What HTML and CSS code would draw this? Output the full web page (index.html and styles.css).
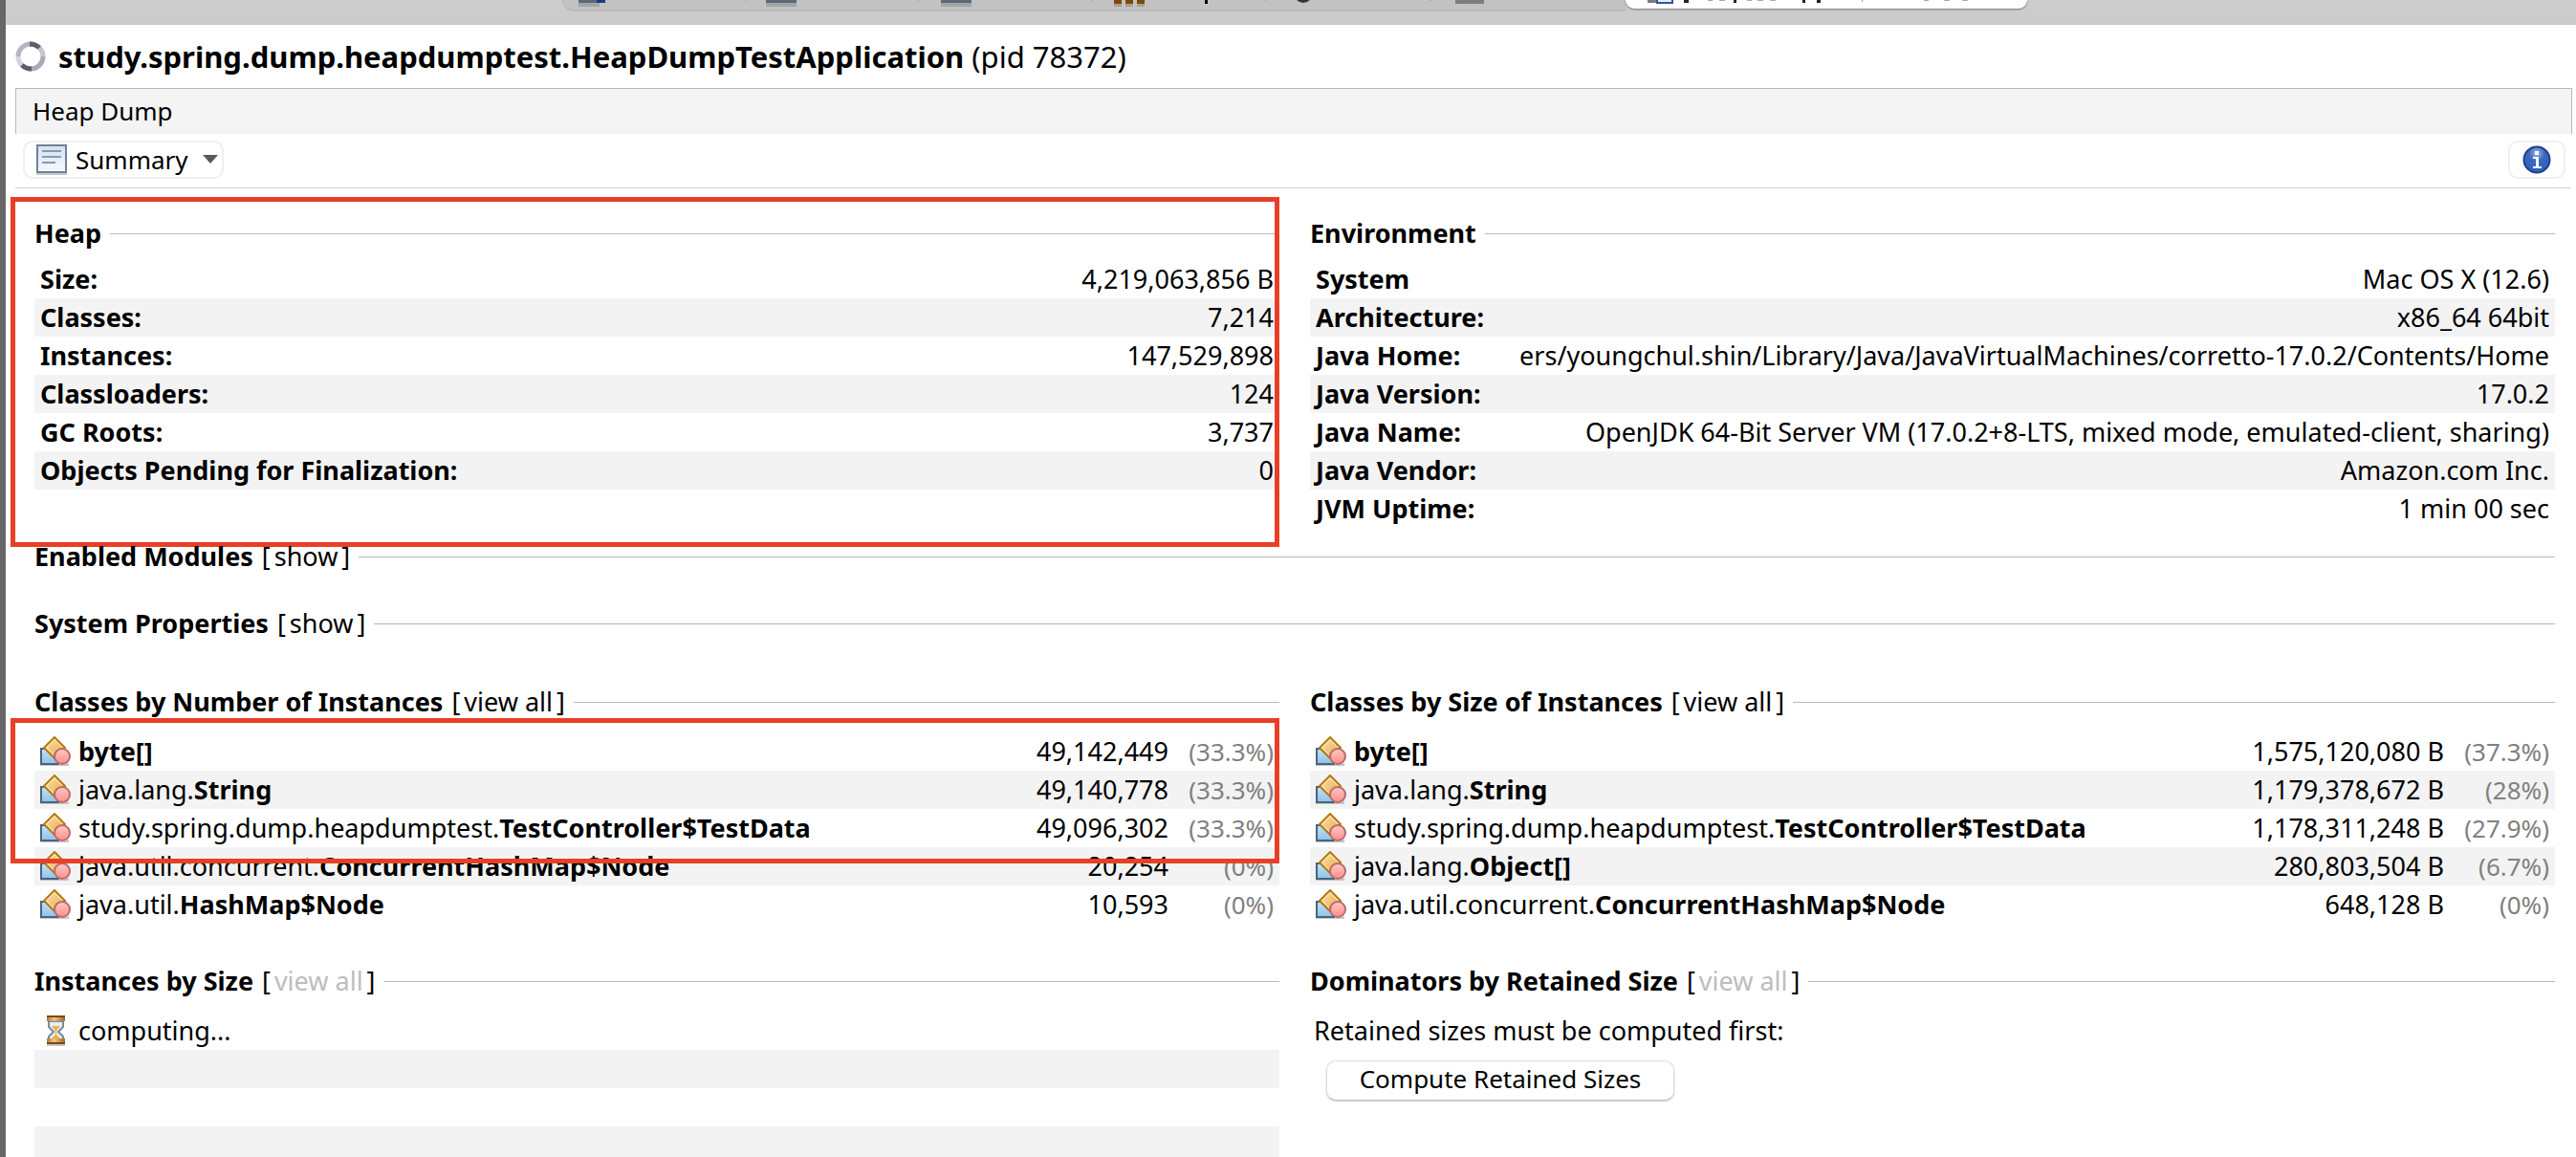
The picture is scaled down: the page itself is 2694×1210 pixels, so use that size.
FILE: index.html
```html
<!DOCTYPE html>
<html lang="en">
<head>
<meta charset="utf-8">
<title>Heap Dump</title>
<link rel="stylesheet" href="styles.css">
</head>
<body>
<svg class="defs" width="0" height="0" aria-hidden="true">
  <defs>
    <linearGradient id="gold" x1="0" y1="0" x2="1" y2="1"><stop offset="0" stop-color="#fbe3b0"/><stop offset="1" stop-color="#e5a845"/></linearGradient>
    <linearGradient id="sky" x1="0" y1="0" x2="0" y2="1"><stop offset="0" stop-color="#c4e2f6"/><stop offset="1" stop-color="#8fc2ea"/></linearGradient>
    <linearGradient id="rose" x1="0" y1="0" x2="0" y2="1"><stop offset="0" stop-color="#ffc9c4"/><stop offset="1" stop-color="#ff8e8b"/></linearGradient>
    <linearGradient id="paper" x1="0" y1="0" x2="0" y2="1"><stop offset="0" stop-color="#d4e0ee"/><stop offset="1" stop-color="#f8f9ff"/></linearGradient>
    <linearGradient id="wood" x1="0" y1="0" x2="1" y2="0"><stop offset="0" stop-color="#b5752a"/><stop offset=".4" stop-color="#ecc48c"/><stop offset="1" stop-color="#a5661f"/></linearGradient>
    <radialGradient id="blue" cx=".5" cy=".25" r=".75"><stop offset="0" stop-color="#9cb9ea"/><stop offset=".4" stop-color="#3c68bd"/><stop offset="1" stop-color="#2f5fc0"/></radialGradient>
    <symbol id="class" viewBox="0 0 32 32">
      <path d="M0 30h24l6-2v3H0z" fill="#c5c5c5"/>
      <path d="M1 13h18v16H1z" fill="url(#sky)" stroke="#46657f" stroke-width="2"/>
      <path d="M15 1 26 12 15 23 4 12z" fill="url(#gold)" stroke="#b57a12" stroke-width="2"/>
      <path d="M15 3.500 23.500 12 15 20.500 6.500 12z" fill="none" stroke="#fff0cf" stroke-width="1"/>
      <circle cx="23" cy="21" r="8" fill="url(#rose)" stroke="#b96a6a" stroke-width="2"/>
    </symbol>
  </defs>
</svg>
<div class="window">
  <div class="topbar">
    <div class="tabs">
      <div class="strip">
        <svg viewBox="0 0 1120 12" aria-hidden="true">
          <path d="M16 0h22v3H16zM212 0h32v3h-32zM395 0h32v3h-32z" fill="#5d6975"/>
          <path d="M16 3h22v4H16zM212 3h32v4h-32zM395 3h32v4h-32z" fill="#a3a6a8"/>
          <path d="M35 0h9v3h-9z" fill="#1c3c88"/>
          <path d="M576 0h8v4h-8zM588 0h8v4h-8zM600 0h8v4h-8z" fill="#7d4a06"/>
          <path d="M576 4h8v3h-8zM588 4h8v3h-8zM600 4h8v3h-8z" fill="#a8a09a"/>
          <path d="M671 0h3v4h-3z" fill="#000"/>
          <path d="M767 0h14q-7 6-14 0z" fill="#333"/>
          <path d="M933 0h30v4h-30z" fill="#7d7d7d"/>
          <path d="M191 0h1v1h-1zM371 0h1v1h-1zM553 0h1v1h-1zM735 0h1v1h-1zM907 0h1v1h-1z" fill="#999"/>
        </svg>
      </div>
      <div class="active">
        <svg viewBox="0 0 420 10" aria-hidden="true">
          <path d="M23 0h10v3H23z" fill="#7b7c80"/><path d="M32 0h18v4H32z" fill="#34559a"/><path d="M34 0h14v2H34z" fill="#e9eefb"/>
          <path d="M61 0h5v3h-5zM113 0h3v3h-3zM185 0h3v3h-3zM200 0h4v3h-4z" fill="#222"/>
          <path d="M86 0h5v1h-5zM98 0h6v1h-6zM127 0h5v1h-5zM138 0h6v1h-6zM151 0h6v1h-6zM247 0h1v2h-1zM312 0h5v1h-5zM333 0h6v1h-6zM352 0h6v1h-6z" fill="#aaa"/>
        </svg>
      </div>
    </div>
  </div>

  <header class="title">
    <svg width="32" height="32" viewBox="0 0 32 32" fill="none" stroke-width="5" aria-hidden="true">
      <path d="M16 3a13 13 0 0 1 13 13" stroke="#c3c5cd"/><path d="M29 16a13 13 0 0 1-13 13" stroke="#a9abb6"/>
      <path d="M16 29A13 13 0 0 1 3 16" stroke="#d3d5db"/><path d="M3 16A13 13 0 0 1 16 3" stroke="#b4b6c0"/>
      <path d="M15 3q6 0 10 4" stroke="#5b5d69"/><path d="M17 29q-6 0-10-4" stroke="#5b5d69"/>
    </svg>
    <h1>study.spring.dump.heapdumptest.HeapDumpTestApplication <span>(pid 78372)</span></h1>
  </header>

  <div class="caption">Heap Dump</div>

  <div class="toolbar">
    <button class="tool" type="button">
      <svg width="32" height="32" viewBox="0 0 32 32" aria-hidden="true">
        <path d="M0 29h32v3H0z" fill="#c8c8c8"/><path d="M1 1h30v28H1z" fill="url(#paper)" stroke="#71819a" stroke-width="2"/>
        <path d="M6 7h20M6 13h20M6 19h14" stroke="#8699b2" stroke-width="2"/>
      </svg>
      <span>Summary</span>
      <svg class="arrow" width="16" height="10" viewBox="0 0 16 10" aria-hidden="true"><path d="M0 0h16L8 9z" fill="#5a5a5a"/></svg>
    </button>
    <button class="tool info" type="button" aria-label="Information">
      <svg width="30" height="30" viewBox="0 0 30 30" aria-hidden="true">
        <circle cx="15" cy="15" r="13.500" fill="url(#blue)" stroke="#1d428f" stroke-width="2"/>
        <path d="M13 6h4v4h-4zM11 12h6v10h3v2h-9v-2h3v-8h-3z" fill="#fff"/>
      </svg>
    </button>
  </div>

  <main>
    <div class="columns">
      <section>
        <div class="head"><h2>Heap</h2></div>
        <table class="facts">
          <tr><th scope="row">Size:</th><td>4,219,063,856 B</td></tr>
          <tr><th scope="row">Classes:</th><td>7,214</td></tr>
          <tr><th scope="row">Instances:</th><td>147,529,898</td></tr>
          <tr><th scope="row">Classloaders:</th><td>124</td></tr>
          <tr><th scope="row">GC Roots:</th><td>3,737</td></tr>
          <tr><th scope="row">Objects Pending for Finalization:</th><td>0</td></tr>
        </table>
        <div class="mark mark-heap"></div>
      </section>
      <section>
        <div class="head"><h2>Environment</h2></div>
        <table class="facts">
          <tr><th scope="row">System</th><td>Mac OS X (12.6)</td></tr>
          <tr><th scope="row">Architecture:</th><td>x86_64 64bit</td></tr>
          <tr><th scope="row">Java Home:</th><td>ers/youngchul.shin/Library/Java/JavaVirtualMachines/corretto-17.0.2/Contents/Home</td></tr>
          <tr><th scope="row">Java Version:</th><td>17.0.2</td></tr>
          <tr><th scope="row">Java Name:</th><td>OpenJDK 64-Bit Server VM (17.0.2+8-LTS, mixed mode, emulated-client, sharing)</td></tr>
          <tr><th scope="row">Java Vendor:</th><td>Amazon.com Inc.</td></tr>
          <tr><th scope="row">JVM Uptime:</th><td>1 min 00 sec</td></tr>
        </table>
      </section>
    </div>

    <section class="folded">
      <div class="head"><h2>Enabled Modules</h2><span class="act">[<a href="#modules">show</a>]</span></div>
    </section>
    <section class="folded">
      <div class="head"><h2>System Properties</h2><span class="act">[<a href="#properties">show</a>]</span></div>
    </section>

    <div class="columns ranked">
      <section>
        <div class="head"><h2>Classes by Number of Instances</h2><span class="act">[<a href="#by-count">view all</a>]</span></div>
        <table class="list">
          <tr><td class="name"><svg><use href="#class"/></svg><b>byte[]</b></td><td class="num">49,142,449</td><td class="pct">(33.3%)</td></tr>
          <tr><td class="name"><svg><use href="#class"/></svg>java.lang.<b>String</b></td><td class="num">49,140,778</td><td class="pct">(33.3%)</td></tr>
          <tr><td class="name"><svg><use href="#class"/></svg>study.spring.dump.heapdumptest.<b>TestController$TestData</b></td><td class="num">49,096,302</td><td class="pct">(33.3%)</td></tr>
          <tr><td class="name"><svg><use href="#class"/></svg>java.util.concurrent.<b>ConcurrentHashMap$Node</b></td><td class="num">20,254</td><td class="pct">(0%)</td></tr>
          <tr><td class="name"><svg><use href="#class"/></svg>java.util.<b>HashMap$Node</b></td><td class="num">10,593</td><td class="pct">(0%)</td></tr>
        </table>
        <div class="mark mark-classes"></div>
      </section>
      <section>
        <div class="head"><h2>Classes by Size of Instances</h2><span class="act">[<a href="#by-size">view all</a>]</span></div>
        <table class="list">
          <tr><td class="name"><svg><use href="#class"/></svg><b>byte[]</b></td><td class="num">1,575,120,080 B</td><td class="pct">(37.3%)</td></tr>
          <tr><td class="name"><svg><use href="#class"/></svg>java.lang.<b>String</b></td><td class="num">1,179,378,672 B</td><td class="pct">(28%)</td></tr>
          <tr><td class="name"><svg><use href="#class"/></svg>study.spring.dump.heapdumptest.<b>TestController$TestData</b></td><td class="num">1,178,311,248 B</td><td class="pct">(27.9%)</td></tr>
          <tr><td class="name"><svg><use href="#class"/></svg>java.lang.<b>Object[]</b></td><td class="num">280,803,504 B</td><td class="pct">(6.7%)</td></tr>
          <tr><td class="name"><svg><use href="#class"/></svg>java.util.concurrent.<b>ConcurrentHashMap$Node</b></td><td class="num">648,128 B</td><td class="pct">(0%)</td></tr>
        </table>
      </section>
    </div>

    <div class="columns pending">
      <section>
        <div class="head"><h2>Instances by Size</h2><span class="act off">[<a aria-disabled="true">view all</a>]</span></div>
        <table class="list">
          <tr><td class="name"><svg viewBox="0 0 32 32" aria-hidden="true">
            <path d="M7 29h19v3H7z" fill="#c8c8c8"/>
            <path d="M9 6h15v6l-5 5 5 5v3H9v-3l5-5-5-5z" fill="#e6edf5" stroke="#7c8b9a" stroke-width="2"/>
            <path d="M12 11h9l-4 5v4l5 5H11l5-5v-4z" fill="#f0b23c"/>
            <path d="M7 1h19v5H7zM7 24h19v5H7z" fill="url(#wood)"/>
            <path d="M7 1h19M7 29h19" stroke="#7a4a12" stroke-width="2"/>
          </svg>computing...</td></tr>
          <tr><td></td></tr>
          <tr><td></td></tr>
          <tr><td></td></tr>
        </table>
      </section>
      <section>
        <div class="head"><h2>Dominators by Retained Size</h2><span class="act off">[<a aria-disabled="true">view all</a>]</span></div>
        <p>Retained sizes must be computed first:</p>
        <button class="compute" type="button">Compute Retained Sizes</button>
      </section>
    </div>
  </main>
</div>
</body>
</html>
```
FILE: styles.css
```css
* { box-sizing: border-box; }

html { height: 100%; overflow: hidden; }

body {
  margin: 0;
  height: 100%;
  overflow: hidden;
  background: #fff;
  color: #000;
  font: 27px/40px "Noto Sans", "Open Sans", sans-serif;
}

.defs { position: absolute; }

.window {
  min-height: 100%;
  border-left: 6px solid #666;
}

/* Bottom edge of the application tab strip */
.topbar {
  height: 26px;
  background: #ccc;
  display: flex;
  justify-content: center;
}
.tabs { display: flex; height: 12px; width: 1532px; margin-left: 8px; }
.strip {
  flex: 1;
  min-width: 0;
  height: 12px;
  overflow: hidden;
  background: #c2c2c2;
  border-bottom: 2px solid #bbb;
  border-left: 1px solid #bbb;
  border-radius: 0 0 0 12px;
}
.strip svg { display: block; width: 1120px; height: 12px; }
.active {
  height: 9px;
  width: 420px;
  background: #fff;
  border-radius: 0 0 10px 10px;
  box-shadow: 0 1px 2px #777;
}
.active svg { display: block; width: 420px; height: 10px; }

.title {
  display: flex;
  align-items: center;
  gap: 13px;
  height: 66px;
  padding-left: 10px;
}
h1 { margin: 0; font-size: 31px; font-weight: 700; }
h1 span { font-weight: 400; }

.caption {
  height: 48px;
  margin: 0 4px 0 10px;
  padding-left: 17px;
  font-size: 26px;
  line-height: 46px;
  background: #f4f4f4;
  border: 1px solid #b8b8b8;
  border-bottom: 0;
}

.toolbar {
  display: flex;
  justify-content: space-between;
  margin: 0 5px 0 10px;
  padding: 7px 6px 9px 8px;
  border-bottom: 1px solid #d4d4d4;
}
button { font: inherit; font-size: 26px; color: inherit; background: #fff; }
.tool {
  display: flex;
  align-items: center;
  gap: 9px;
  height: 40px;
  padding: 0 4px 0 12px;
  border: 2px solid #f0f0f0;
  border-radius: 10px;
}
.arrow { margin-left: 6px; }
.info { width: 60px; padding: 0; justify-content: center; }

main { padding: 27px 22px 0 30px; }
.columns {
  display: grid;
  grid-template-columns: 1fr 1fr;
  gap: 32px;
}
section { position: relative; min-width: 0; }
.folded { margin-top: 10px; }
.folded + .folded { margin-top: 30px; }
.ranked { margin-top: 42px; }
.pending { margin-top: 40px; }

.head { display: flex; align-items: center; gap: 9px; height: 40px; }
.head::after { content: ""; flex: 1; height: 1px; background: #b8b8b8; }
h2 { margin: 0; font-size: inherit; font-weight: 700; }
.act { display: flex; gap: 4px; }
.act a { color: inherit; text-decoration: none; }
.off a { color: #bdbdbd; }

table { width: 100%; border-collapse: collapse; }
tr { height: 40px; }
tr:nth-child(even) { background: #f3f3f3; }
th, td { padding: 0; white-space: nowrap; }
th { text-align: left; font-weight: 700; padding-left: 6px; }
b { font-weight: 700; }

.facts { margin-top: 8px; }
.facts td { text-align: right; padding-right: 6px; }

.list { margin-top: 12px; }
.list svg { width: 32px; height: 32px; flex: none; margin-right: 8px; }
.name { display: flex; align-items: center; height: 40px; padding-left: 6px; }
.num { text-align: right; }
.pct { width: 116px; padding-right: 6px; text-align: right; color: #808080; font-size: 26px; }

p { margin: 12px 0 0 4px; }
.compute {
  display: block;
  width: 364px;
  height: 42px;
  margin: 11px 0 0 17px;
  padding: 0 0 4px;
  line-height: 36px;
  border: 1px solid #ddd;
  border-bottom-color: #bbb;
  border-radius: 10px;
  box-shadow: 0 1px 2px #ccc;
}

/* Red highlight frames drawn over the content */
.mark {
  position: absolute;
  left: -25px;
  right: 0;
  border: 5px solid #e93f26;
  pointer-events: none;
}
.mark-heap { top: -18px; bottom: -20px; }
.mark-classes { top: 37px; height: 152px; }
```
